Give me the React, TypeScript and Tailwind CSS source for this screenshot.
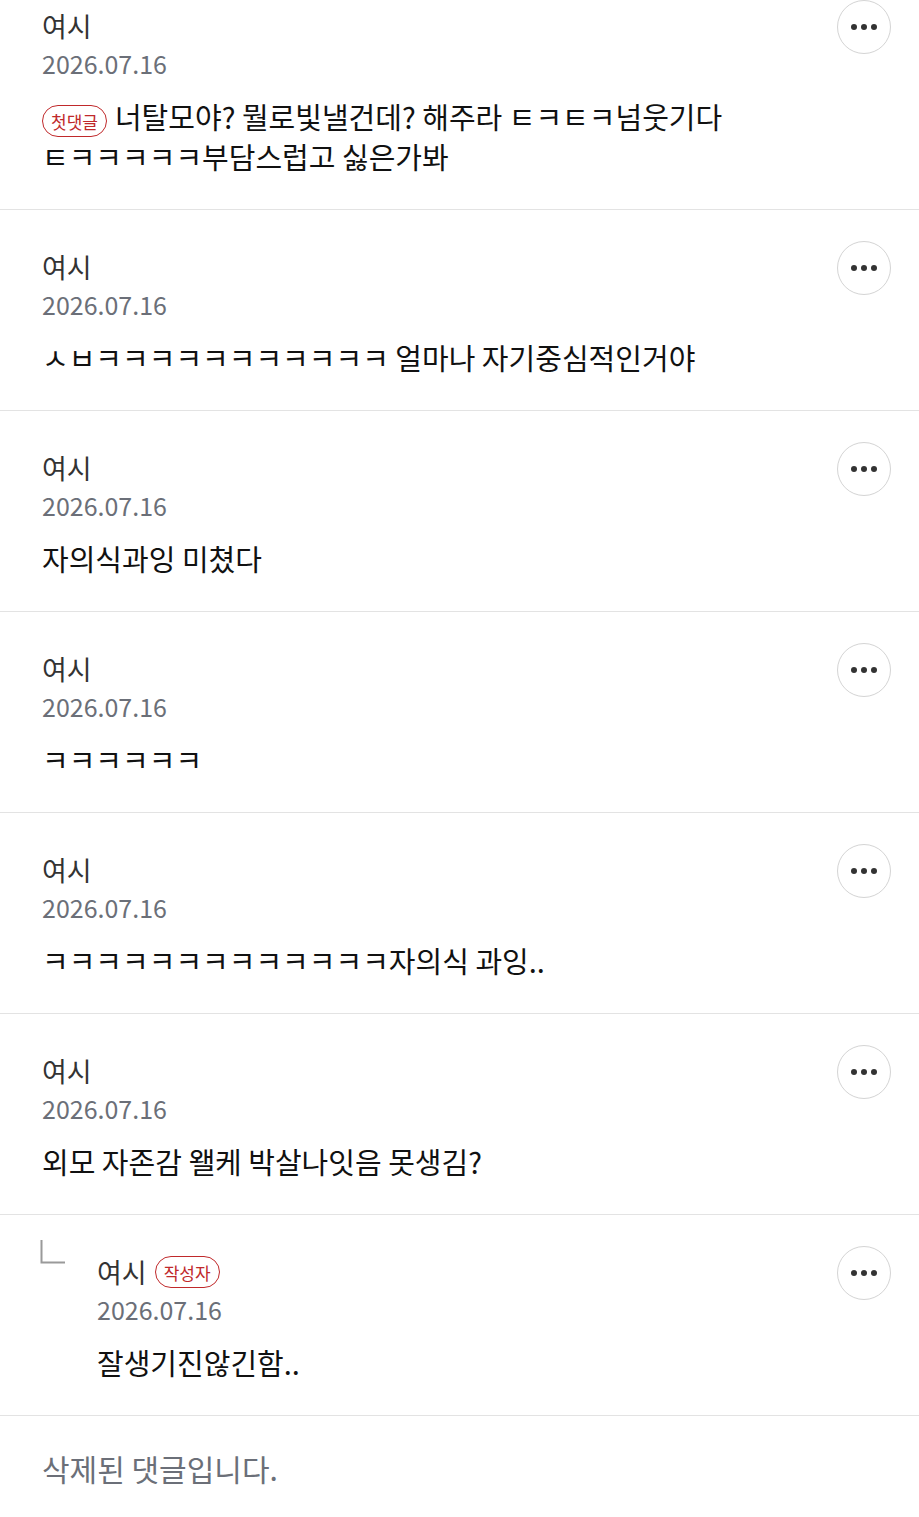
import React from 'react';

interface Comment {
     lines: string[];
     first?: boolean;
     reply?: boolean;
}

const comments: Comment[] = [
     { lines: ['너탈모야? 뭘로빛낼건데? 해주라 ㅌㅋㅌㅋ넘웃기다', 'ㅌㅋㅋㅋㅋㅋ부담스럽고 싫은가봐'], first: true },
     { lines: ['ㅅㅂㅋㅋㅋㅋㅋㅋㅋㅋㅋㅋㅋ 얼마나 자기중심적인거야'] },
     { lines: ['자의식과잉 미쳤다'] },
     { lines: ['ㅋㅋㅋㅋㅋㅋ'] },
     { lines: ['ㅋㅋㅋㅋㅋㅋㅋㅋㅋㅋㅋㅋㅋ자의식 과잉..'] },
     { lines: ['외모 자존감 왤케 박살나잇음 못생김?'] },
     { lines: ['잘생기진않긴함..'], reply: true },
];

const Badge = ({ label }: { label: string }) => (
     <span className="inline-flex items-center justify-center h-[32px] px-[8px] rounded-full border border-[#c0292b] text-[#c0292b] text-[17px] leading-none align-middle">
          {label}
     </span>
);

const MenuButton = () => (
     <button className="shrink-0 w-[54px] h-[54px] rounded-full border border-[#d4d4d4] bg-white flex items-center justify-center gap-[4px]">
          <span className="w-[6px] h-[6px] rounded-full bg-[#333]" />
          <span className="w-[6px] h-[6px] rounded-full bg-[#333]" />
          <span className="w-[6px] h-[6px] rounded-full bg-[#333]" />
     </button>
);

const CommentRow = ({ comment, index }: { comment: Comment; index: number }) => {
     return (
          <div className={`flex flex-row items-start pt-[31px] pb-[34px] pr-[28px] border-b border-[#e3e3e3] ${index === 0 ? '-mt-[31px]' : ''} ${comment.reply ? 'pl-[40px]' : 'pl-[42px]'}`}>
               {comment.reply && (
                    <svg width="26" height="24" viewBox="0 0 26 24" className="shrink-0 -mt-[6px] mr-[31px]">
                         <path d="M1.5 0 V22.5 H25" fill="none" stroke="#9a9a9a" strokeWidth="2" />
                    </svg>
               )}
               <div className="flex-1 flex flex-col pt-[8px]">
                    <div className="flex flex-row items-center gap-[8px] h-[36px]">
                         <span className="text-[27px] leading-[36px] text-[#333]">여시</span>
                         {comment.reply && <Badge label="작성자" />}
                    </div>
                    <span className="text-[25px] leading-[38px] text-[#6b6f78]">2026.07.16</span>
                    <p className="mt-[15px] text-[29px] leading-[38px] text-[#111]">
                         {comment.first && (
                              <>
                                   <Badge label="첫댓글" />
                                   <span className="inline-block w-[8px]" />
                              </>
                         )}
                         {comment.lines.map((line, i) => (
                              <React.Fragment key={i}>
                                   {i > 0 && <br />}
                                   {line}
                              </React.Fragment>
                         ))}
                    </p>
               </div>
               <MenuButton />
          </div>
     );
};

export default function App() {
     return (
          <div className="w-[919px] h-[1517px] overflow-hidden bg-white" style={{ fontFamily: '"Noto Sans CJK KR", "Noto Sans", sans-serif' }}>
               {comments.map((c, i) => (
                    <CommentRow key={i} comment={c} index={i} />
               ))}
               <div className="pl-[42px] pt-[32px]">
                    <span className="text-[30px] leading-[40px] text-[#6b6f78]">삭제된 댓글입니다.</span>
               </div>
          </div>
     );
}
